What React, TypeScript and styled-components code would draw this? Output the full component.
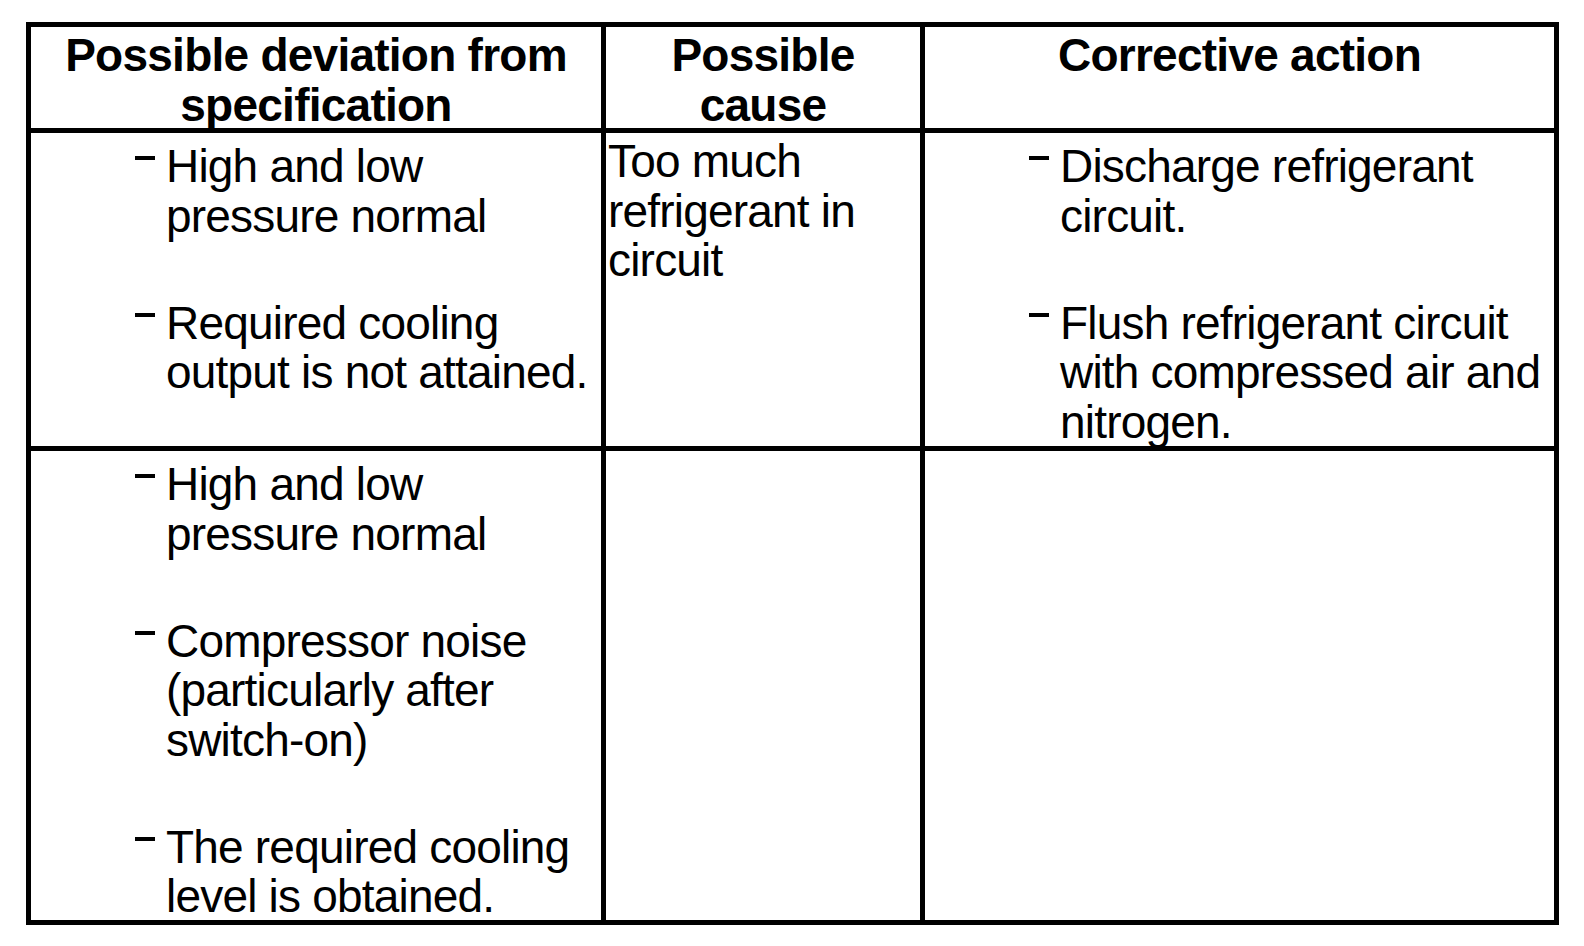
import React from "react";
import styled, { createGlobalStyle } from "styled-components";

const Global = createGlobalStyle`
  html, body {
    margin: 0;
    padding: 0;
    background: #ffffff;
  }
  body {
    font-family: "Liberation Sans", Arial, sans-serif;
    color: #000000;
  }
`;

const Page = styled.div`
  padding: 22px 0 0 26px;
`;

const Table = styled.div`
  display: grid;
  grid-template-columns: 570px 314px 629px;
  grid-template-rows: 101px 313px 469px;
  gap: 5px;
  padding: 5px;
  background: #000000;
  width: max-content;
`;

const HeadCell = styled.div`
  background: #ffffff;
  font-weight: 700;
  font-size: 46px;
  line-height: 49.5px;
  letter-spacing: -0.75px;
  text-align: center;
  padding-top: 4px;
`;

const Cell = styled.div<{ $padTop?: number; $padLeft?: number }>`
  background: #ffffff;
  padding: ${(p) => p.$padTop ?? 9}px 0 0 ${(p) => p.$padLeft ?? 104}px;
  font-size: 46px;
  line-height: 49.5px;
  letter-spacing: -0.8px;
`;

const List = styled.ul`
  list-style: none;
  margin: 0;
  padding: 0;
  display: flex;
  flex-direction: column;
  gap: 57.5px;
`;

const Item = styled.li`
  display: flex;
  align-items: flex-start;
  gap: 11px;
`;

const Dash = styled.span`
  flex: none;
  width: 20px;
  height: 4px;
  background: #000000;
  margin-top: 14px;
`;

const ItemText = styled.span`
  white-space: nowrap;
`;

const Plain = styled.div`
  white-space: nowrap;
`;

type Lines = string[];

const Bullets: React.FC<{ items: Lines[] }> = ({ items }) => (
  <List>
    {items.map((lines, i) => (
      <Item key={i}>
        <Dash />
        <ItemText>
          {lines.map((l, j) => (
            <React.Fragment key={j}>
              {l}
              {j < lines.length - 1 && <br />}
            </React.Fragment>
          ))}
        </ItemText>
      </Item>
    ))}
  </List>
);

export default function App() {
  return (
    <>
      <Global />
      <Page>
        <Table>
          <HeadCell>
            Possible deviation from
            <br />
            specification
          </HeadCell>
          <HeadCell>
            Possible
            <br />
            cause
          </HeadCell>
          <HeadCell>Corrective action</HeadCell>

          <Cell>
            <Bullets
              items={[
                ["High and low", "pressure normal"],
                ["Required cooling", "output is not attained."],
              ]}
            />
          </Cell>
          <Cell $padTop={4} $padLeft={2}>
            <Plain>
              Too much
              <br />
              refrigerant in
              <br />
              circuit
            </Plain>
          </Cell>
          <Cell>
            <Bullets
              items={[
                ["Discharge refrigerant", "circuit."],
                ["Flush refrigerant circuit", "with compressed air and", "nitrogen."],
              ]}
            />
          </Cell>

          <Cell>
            <Bullets
              items={[
                ["High and low", "pressure normal"],
                ["Compressor noise", "(particularly after", "switch-on)"],
                ["The required cooling", "level is obtained."],
              ]}
            />
          </Cell>
          <Cell />
          <Cell />
        </Table>
      </Page>
    </>
  );
}
